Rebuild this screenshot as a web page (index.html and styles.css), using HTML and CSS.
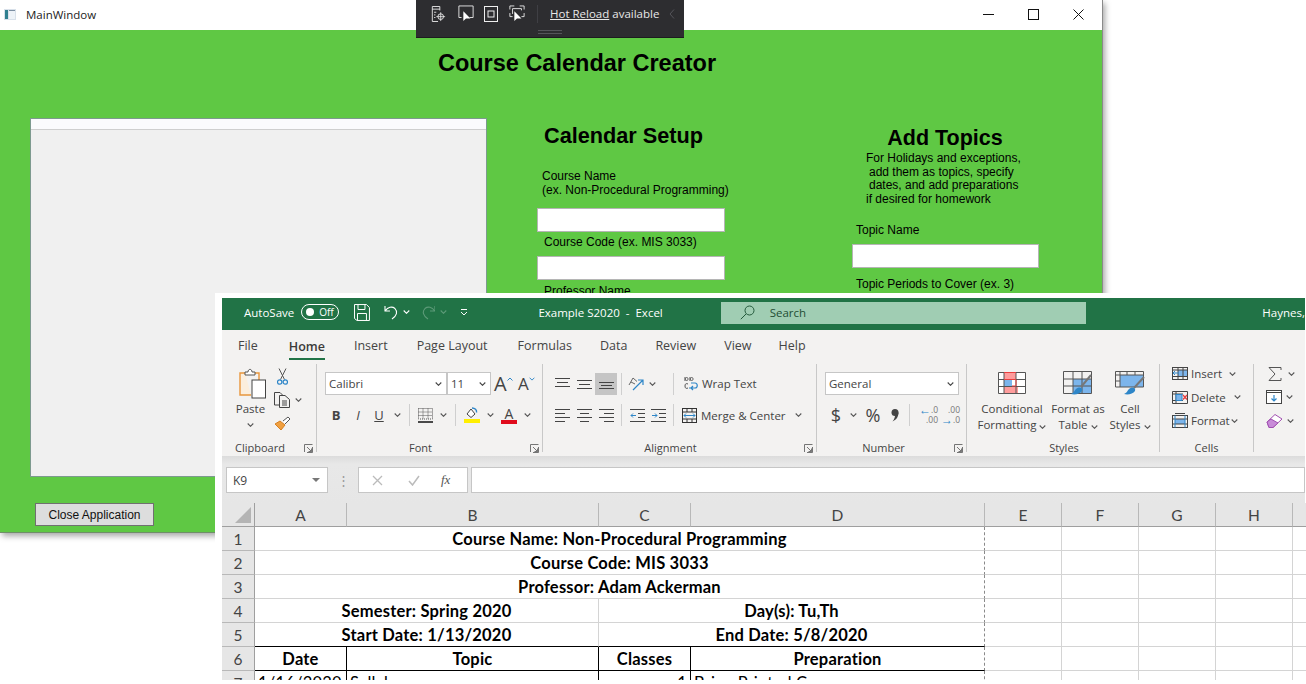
FILE: index.html
```html
<!DOCTYPE html>
<html lang="en">
<head>
  <meta charset="UTF-8" />
  <title>Course Calendar Creator</title>
  <link rel="stylesheet" href="styles.css">
</head>
<body>
  <svg class="defs" width="0" height="0">
    <symbol id="chev" viewBox="0 0 7 4"><path d="M.7.5 3.5 3.3 6.3.5" fill="none" stroke="currentColor" stroke-width="1.1"/></symbol>
    <symbol id="launch" viewBox="0 0 9 9"><path d="M.5 8V.5H8.5M8.5 3V8.5H3M3 3 7.5 7.5M7.5 4.5V7.5H4.5" fill="none" stroke="#666" stroke-width=".9"/></symbol>
  </svg>

  <div class="desktop">

    <div class="main-window">
      <div class="titlebar">
        <svg class="app-icon" width="12" height="11" viewBox="0 0 12 11"><rect width="12" height="11" fill="#d9e1ea"/><rect x="1" y="1" width="3" height="9" fill="#2f7f8f"/><rect x="5" y="2" width="6" height="8" fill="#eef3f8"/><rect x="5" y="1" width="6" height="1" fill="#7c8fa3"/></svg>
        <span class="titlebar-text">MainWindow</span>
        <div class="window-controls">
          <svg width="11" height="11" viewBox="0 0 11 11"><path d="M0 5.5H11" stroke="#111"/></svg>
          <svg width="11" height="11" viewBox="0 0 11 11"><rect x=".5" y=".5" width="10" height="10" fill="none" stroke="#111"/></svg>
          <svg width="11" height="11" viewBox="0 0 11 11"><path d="M.5.5 10.5 10.5M10.5.5.5 10.5" stroke="#111"/></svg>
        </div>
      </div>

      <div class="app">
        <h1 class="app-title">Course Calendar Creator</h1>
        <div class="app-columns">
          <div class="col-list">
            <div class="listbox"><div class="listbox-head"></div></div>
            <button class="close-btn">Close Application</button>
          </div>
          <div class="col-setup">
            <h2 class="setup-title">Calendar Setup</h2>
            <p class="label course-name">Course Name<br>(ex. Non-Procedural Programming)</p>
            <div class="textbox"></div>
            <p class="label course-code">Course Code (ex. MIS 3033)</p>
            <div class="textbox"></div>
            <p class="label prof-name">Professor Name</p>
          </div>
          <div class="col-topics">
            <h2 class="topics-title">Add Topics</h2>
            <div class="topics-note">
              <p>For Holidays and exceptions,</p>
              <p class="nudge">add them as topics, specify</p>
              <p class="nudge">dates, and add preparations</p>
              <p>if desired for homework</p>
            </div>
            <p class="label topic-name">Topic Name</p>
            <div class="textbox"></div>
            <p class="label topic-periods">Topic Periods to Cover (ex. 3)</p>
          </div>
        </div>
      </div>
    </div>

    <div class="hot-reload">
      <svg class="hr-icon hr-1" width="15" height="18" viewBox="0 0 17 20" fill="none" stroke="#eee"><path d="M8 18.5H1.5V1.5H10V6M1.5 4.5H10M3.5 8H6M3.5 11H5M3.5 14H5"/><circle cx="11" cy="13" r="3.2"/><path d="M11 8V18M6 13H16" stroke-width=".9"/></svg>
      <svg class="hr-icon hr-2" width="16" height="17" viewBox="0 0 18 19" fill="none" stroke="#eee"><path d="M4 14H1V1H17V14H13"/><path d="M6 7 6 18 9 15 14 15Z" fill="#fff" stroke="none"/></svg>
      <svg class="hr-icon hr-3" width="14" height="16" viewBox="0 0 14 16" fill="none" stroke="#eee"><rect x=".5" y=".5" width="13" height="15"/><rect x="4" y="5" width="6" height="6"/></svg>
      <svg class="hr-icon hr-4" width="16" height="17" viewBox="0 0 18 19" fill="none" stroke="#eee"><path d="M1 5V1H6M12 1H17V5M1 9V13H4M14 13H17V9M4 4H14V6M4 4V10"/><path d="M6 7 6 18 9 15 14 15Z" fill="#fff" stroke="none"/></svg>
      <span class="hr-sep"></span>
      <span class="hr-text"><a class="hr-link">Hot Reload</a> available</span>
      <svg class="hr-back" width="6" height="10" viewBox="0 0 6 10"><path d="M5 .5 1 5 5 9.5" fill="none" stroke="#55555a"/></svg>
      <div class="hr-grip"></div>
    </div>

    <div class="excel">
      <div class="xl-titlebar">
        <span class="autosave">AutoSave</span>
        <span class="toggle"><i class="toggle-dot"></i><span>Off</span></span>
        <svg class="xl-save" width="16" height="17" viewBox="0 0 16 17" fill="none" stroke="#fff"><path d="M.5.5H12.5L15.5 3.5V16.5H3L.5 14.5Z"/><path d="M4 .5V5.5H11V.5M3.5 16V9.5H12.5V16.5"/></svg>
        <svg class="xl-undo" width="15" height="15" viewBox="0 0 15 15" fill="none" stroke="#fff" stroke-width="1.1"><path d="M1 1V6H6M1 6C4 2 8 1 11 3.500C14 6.500 13 10.500 8 14"/></svg>
        <svg class="xl-chev" width="7" height="4" color="#fff"><use href="#chev"/></svg>
        <svg class="xl-redo" width="15" height="15" viewBox="0 0 15 15" fill="none" stroke="#5d9a78" stroke-width="1.1"><path d="M14 1V6H9M14 6C11 2 7 1 4 3.500C1 6.500 2 10.500 7 14"/></svg>
        <svg class="xl-chev dim" width="7" height="4" color="#5d9a78"><use href="#chev"/></svg>
        <svg class="xl-qat" width="8" height="8" viewBox="0 0 8 8" fill="none" stroke="#fff"><path d="M1 1.500H7M1 4 4 7 7 4"/></svg>
        <span class="xl-doc">Example S2020&nbsp; -&nbsp; Excel</span>
        <div class="xl-search">
          <svg width="15" height="15" viewBox="0 0 15 15" fill="none" stroke="#245a3c"><circle cx="9.500" cy="5.500" r="4.500"/><path d="M6 9 .8 14.200"/></svg>
          <span>Search</span>
        </div>
        <span class="xl-user">Haynes,</span>
      </div>

      <nav class="xl-tabs">
        <span class="tab t-file">File</span>
        <span class="tab t-home">Home</span>
        <span class="tab t-insert">Insert</span>
        <span class="tab t-page">Page Layout</span>
        <span class="tab t-formulas">Formulas</span>
        <span class="tab t-data">Data</span>
        <span class="tab t-review">Review</span>
        <span class="tab t-view">View</span>
        <span class="tab t-help">Help</span>
      </nav>

      <div class="ribbon">
        <section class="group g-clipboard">
          <div class="clip-body">
            <div class="paste">
              <svg width="28" height="31" viewBox="0 0 28 31" fill="none"><path d="M7 5H2V27H13" stroke="#e8963c" stroke-width="1.400" fill="#fbeedd"/><path d="M17 5H21V12" stroke="#e8963c" stroke-width="1.400"/><path d="M7 7V4H10C10 .5 14 .5 14 4H17V7Z" stroke="#555" fill="#fff"/><rect x="14" y="12" width="13.500" height="18" fill="#fff" stroke="#444"/></svg>
              <span class="paste-text">Paste</span>
              <svg class="paste-chev" width="7" height="4" color="#555"><use href="#chev"/></svg>
            </div>
            <div class="clip-tools">
              <svg width="11" height="17" viewBox="0 0 11 17" fill="none"><path d="M2 .5 7.500 11.500M9 .5 3.500 11.500" stroke="#555"/><circle cx="2.700" cy="14" r="2.200" stroke="#2e86c8" stroke-width="1.200"/><circle cx="8.300" cy="14" r="2.200" stroke="#2e86c8" stroke-width="1.200"/></svg>
              <div class="clip-copy">
                <svg width="16" height="16" viewBox="0 0 16 16" fill="none" stroke="#444"><path d="M5 13H.5V.5H6L9 3.500"/><path d="M5.500 3.500H11L15.500 7.500V15.500H5.500ZM8 9H13M8 11H13M8 13H13"/></svg>
                <svg class="chev-gap" width="7" height="4" color="#555"><use href="#chev"/></svg>
              </div>
              <svg class="clip-brush" width="17" height="16" viewBox="0 0 17 16" fill="none"><path d="M1 8 7 14 11 9 6 5Z" fill="#f0a040" stroke="#d67f20"/><path d="M9 5 14 1 16 3 11 8" stroke="#555" fill="#fff"/></svg>
            </div>
          </div>
          <div class="group-label">Clipboard<svg class="launch" width="9" height="9"><use href="#launch"/></svg></div>
        </section>

        <section class="group g-font">
          <div class="rows">
            <div class="row">
              <div class="box font-box"><span>Calibri</span><svg width="7" height="4" color="#444"><use href="#chev"/></svg></div>
              <div class="box size-box"><span>11</span><svg width="7" height="4" color="#444"><use href="#chev"/></svg></div>
              <span class="grow-a big">A<svg width="6" height="4" color="#2e86c8"><path d="M.5 3.500 3 1 5.500 3.500" fill="none" stroke="currentColor"/></svg></span>
              <span class="grow-a small">A<svg width="6" height="4" color="#2e86c8"><use href="#chev"/></svg></span>
            </div>
            <div class="row row-two">
              <span class="tool w22 bold">B</span>
              <span class="tool w22 italic">I</span>
              <span class="tool w20 under">U</span>
              <span class="tool w16"><svg width="7" height="4" color="#555"><use href="#chev"/></svg></span>
              <span class="sep"></span>
              <span class="tool w20"><svg width="15" height="15" viewBox="0 0 15 15" fill="none"><path d="M.5.5H14.500V11H.5ZM5 .5V11M10 .5V11M.5 4H14.500M.5 7.500H14.500" stroke="#555" stroke-dasharray="1 1"/><path d="M0 14H15" stroke="#111" stroke-width="1.500"/></svg></span>
              <span class="tool w16"><svg width="7" height="4" color="#555"><use href="#chev"/></svg></span>
              <span class="sep"></span>
              <span class="tool w22"><svg width="16" height="16" viewBox="0 0 16 16" fill="none"><path d="M3 7 7 2 11 7 7 10.500Z" stroke="#444" fill="#fff"/><path d="M8 1C11 1 13 3 12.500 5.500" stroke="#2e86c8" stroke-width="1.400"/><rect y="12" width="16" height="4" fill="#ffef00"/></svg></span>
              <span class="tool w14"><svg width="7" height="4" color="#555"><use href="#chev"/></svg></span>
              <span class="tool w24 color-a">A<i></i></span>
              <span class="tool w12"><svg width="7" height="4" color="#555"><use href="#chev"/></svg></span>
            </div>
          </div>
          <div class="group-label">Font<svg class="launch" width="9" height="9"><use href="#launch"/></svg></div>
        </section>

        <section class="group g-align">
          <div class="rows">
            <div class="row">
              <span class="tool w22"><svg width="15" height="11" viewBox="0 0 15 11"><path d="M0 .5H15M2 4.500H13M0 8.500H15" stroke="#444"/></svg></span>
              <span class="tool w22"><svg width="15" height="11" viewBox="0 0 15 11"><path d="M0 2.500H15M2 6.500H13M0 10.500H15" stroke="#444"/></svg></span>
              <span class="tool w22 active"><svg width="15" height="11" viewBox="0 0 15 11"><path d="M0 4.500H15M2 7.500H13M0 10.500H15" stroke="#444"/></svg></span>
              <span class="sep"></span>
              <span class="tool w18"><svg width="16" height="14" viewBox="0 0 16 14" fill="none"><path d="M1 8 5 1 9 4.500M3 5 7 7" stroke="#666"/><path d="M5 13 15 3M10 3H15V8" stroke="#2e86c8" stroke-width="1.200"/></svg></span>
              <span class="tool w14"><svg width="7" height="4" color="#555"><use href="#chev"/></svg></span>
              <span class="sep sep-far"></span>
              <svg class="wrap-icon" width="14" height="15" viewBox="0 0 14 15" fill="none"><path d="M1 5V1M1 3C2 1 4 1 4 3S2 5 1 3ZM6 1V5M6 3C7 1 9 1 9 3S7 5 6 3ZM4 8C2 7 1 8 1 10S2 13 4 12" stroke="#555"/><path d="M5 12H11C14 12 14 7 11 7H7M7 12 9 10M7 12 9 14" stroke="#2e86c8" stroke-width="1.200"/></svg>
              <span class="wrap-text">Wrap Text</span>
            </div>
            <div class="row row-two">
              <span class="tool w22"><svg width="15" height="13" viewBox="0 0 15 13"><path d="M0 .5H15M0 4.500H10M0 8.500H15M0 12.500H10" stroke="#444"/></svg></span>
              <span class="tool w22"><svg width="15" height="13" viewBox="0 0 15 13"><path d="M0 .5H15M3 4.500H12M0 8.500H15M3 12.500H12" stroke="#444"/></svg></span>
              <span class="tool w22"><svg width="15" height="13" viewBox="0 0 15 13"><path d="M0 .5H15M5 4.500H15M0 8.500H15M5 12.500H15" stroke="#444"/></svg></span>
              <span class="sep"></span>
              <span class="tool w20"><svg width="15" height="13" viewBox="0 0 15 13" fill="none"><path d="M0 .5H15M8 4.500H15M8 8.500H15M0 12.500H15" stroke="#444"/><path d="M6 6.500H1M3 4.500 1 6.500 3 8.500" stroke="#2e86c8"/></svg></span>
              <span class="tool w22"><svg width="15" height="13" viewBox="0 0 15 13" fill="none"><path d="M0 .5H15M8 4.500H15M8 8.500H15M0 12.500H15" stroke="#444"/><path d="M1 6.500H6M4 4.500 6 6.500 4 8.500" stroke="#2e86c8"/></svg></span>
              <span class="sep"></span>
              <svg class="merge-icon" width="15" height="15" viewBox="0 0 15 15" fill="none"><rect x=".5" y=".5" width="14" height="14" stroke="#333"/><path d="M.5 4H14.500M.5 11H14.500M5 .5V4M10 .5V4M5 11V14.500M10 11V14.500" stroke="#333"/><path d="M2 7.500H13M4 5.500 2 7.500 4 9.500M11 5.500 13 7.500 11 9.500" stroke="#2e86c8"/></svg>
              <span class="wrap-text">Merge &amp; Center</span>
              <svg class="merge-chev" width="7" height="4" color="#555"><use href="#chev"/></svg>
            </div>
          </div>
          <div class="group-label">Alignment<svg class="launch" width="9" height="9"><use href="#launch"/></svg></div>
        </section>

        <section class="group g-number">
          <div class="rows">
            <div class="row">
              <div class="box number-box"><span>General</span><svg width="7" height="4" color="#444"><use href="#chev"/></svg></div>
            </div>
            <div class="row row-two">
              <span class="tool w22 num-sym">$</span>
              <span class="tool w12"><svg width="7" height="4" color="#555"><use href="#chev"/></svg></span>
              <span class="tool w28 num-sym">%</span>
              <span class="tool w16"><svg width="8" height="13" viewBox="0 0 8 13"><circle cx="4" cy="3.500" r="3.500" fill="#444"/><path d="M7.500 3.500C7.500 8 5 11 1.500 12.500 3.500 10 4 8 4 6Z" fill="#444"/></svg></span>
              <span class="sep sep-num"></span>
              <span class="tool w23 dec">
                <span class="dec-line"><i class="dec-arrow">&#8592;</i>.0</span>
                <span class="dec-line">.00</span>
              </span>
              <span class="tool w22 dec">
                <span class="dec-line">.00</span>
                <span class="dec-line"><i class="dec-arrow">&#8594;</i>.0</span>
              </span>
            </div>
          </div>
          <div class="group-label">Number<svg class="launch" width="9" height="9"><use href="#launch"/></svg></div>
        </section>

        <section class="group g-styles">
          <div class="style-btns">
            <div class="style-btn w-cond">
              <svg width="28" height="22" viewBox="0 0 28 22"><rect x=".5" y=".5" width="27" height="21" fill="#fff"/><rect x="6" y="1" width="12" height="6.500" fill="#ff9c9c"/><rect x="6" y="8" width="8" height="6" fill="#7cb5ec"/><rect x="6" y="14.500" width="14" height="7" fill="#ff9c9c"/><path d="M.5.5H27.500V21.500H.5ZM.5 7.500H27.500M.5 14.500H27.500M6 .5V21.500M18 .5V21.500" fill="none" stroke="#555"/><path d="M6 7.500H18V14H14M6 .5H18" fill="none" stroke="#e84040"/></svg>
              <span class="btn-text">Conditional</span>
              <span class="btn-text">Formatting <svg width="7" height="4" color="#555"><use href="#chev"/></svg></span>
            </div>
            <div class="style-btn w-table">
              <svg width="30" height="24" viewBox="0 0 30 24"><rect x="10" y="8" width="18" height="14" fill="#7cb5ec"/><path d="M.5.5H28.500V22.500H.5ZM.5 8H28.500M.5 15H28.500M10 .5V22.500M19 .5V22.500" fill="none" stroke="#555"/><path d="M28 4 18 16" stroke="#777" stroke-width="2"/><path d="M13 18C17 15 20 17 19 20 17 23 12 24 8 23 11 22 11 20 13 18Z" fill="#2e86c8"/></svg>
              <span class="btn-text">Format as</span>
              <span class="btn-text">Table <svg width="7" height="4" color="#555"><use href="#chev"/></svg></span>
            </div>
            <div class="style-btn w-cell">
              <svg width="30" height="24" viewBox="0 0 30 24"><rect x="5" y="4" width="24" height="12" fill="#7cb5ec"/><path d="M.5.5H28.500V16H.5ZM.5 4H28.500M5 .5V16M.5 10H5M12 .5V4M20 .5V4" fill="none" stroke="#555"/><path d="M29 6 19 17" stroke="#777" stroke-width="2"/><path d="M14 18C18 15 21 17 20 20 18 23 13 24 9 23 12 22 12 20 14 18Z" fill="#2e86c8"/></svg>
              <span class="btn-text">Cell</span>
              <span class="btn-text">Styles <svg width="7" height="4" color="#555"><use href="#chev"/></svg></span>
            </div>
          </div>
          <div class="group-label">Styles</div>
        </section>

        <section class="group g-cells">
          <div class="cell-rows">
            <div class="cell-row">
              <svg width="16" height="13" viewBox="0 0 16 13" fill="none"><rect x=".5" y=".5" width="15" height="12" stroke="#444"/><rect x="6" y="3" width="9" height="6" fill="#7cb5ec"/><path d="M.5 3H15.500M.5 9.500H15.500M6 .5V12.500M11 .5V12.500" stroke="#444"/><path d="M7 6H1M3 4 1 6 3 8" stroke="#2e86c8"/></svg>
              <span class="cell-label">Insert</span><svg class="chev-insert" width="7" height="4" color="#555"><use href="#chev"/></svg>
            </div>
            <div class="cell-row">
              <svg width="16" height="13" viewBox="0 0 16 13" fill="none"><path d="M.5.5H15.500V12.500H.5ZM.5 3H11M.5 9.500H11M4 .5V12.500" stroke="#444"/><rect x="4" y="3.500" width="6" height="6" fill="#7cb5ec" stroke="#2e86c8"/><path d="M11 4 15 8.500M15 4 11 8.500" stroke="#e84040" stroke-width="1.300"/></svg>
              <span class="cell-label">Delete</span><svg class="chev-delete" width="7" height="4" color="#555"><use href="#chev"/></svg>
            </div>
            <div class="cell-row">
              <svg width="16" height="15" viewBox="0 0 16 15" fill="none"><rect x=".5" y="2.500" width="15" height="12" stroke="#444"/><rect x="3" y="6" width="10" height="5" fill="#7cb5ec"/><path d="M.5 6H15.500M.5 11H15.500M3 .5H13" stroke="#444"/><path d="M3 2.500V14.500M13 2.500V14.500" stroke="#2e86c8"/></svg>
              <span class="cell-label">Format</span><svg class="chev-format" width="7" height="4" color="#555"><use href="#chev"/></svg>
            </div>
          </div>
          <div class="group-label">Cells</div>
        </section>

        <section class="group g-edit">
          <div class="cell-rows edit-rows">
            <div class="cell-row">
              <svg class="sum" width="14" height="14" viewBox="0 0 14 14" fill="none"><path d="M13 3V.5H1L7 7 1 13.500H13V11" stroke="#555"/></svg>
              <svg class="chev-sum" width="7" height="4" color="#555"><use href="#chev"/></svg>
            </div>
            <div class="cell-row">
              <svg width="16" height="14" viewBox="0 0 16 14" fill="none"><rect x=".5" y=".5" width="15" height="13" stroke="#444" fill="#fff"/><path d="M.5 2.500H15.500" stroke="#444"/><path d="M8 5V11M5.500 8.500 8 11 10.500 8.500" stroke="#2e86c8" stroke-width="1.200"/></svg>
              <svg class="chev-edit" width="7" height="4" color="#555"><use href="#chev"/></svg>
            </div>
            <div class="cell-row">
              <svg width="17" height="14" viewBox="0 0 17 14" fill="none"><path d="M1 8 9 .5 16 5 7 13.500H3Z" fill="#fff" stroke="#a04fb0"/><path d="M1 8 5 5 12 9 7 13.500H3Z" fill="#c88bd8" stroke="#a04fb0"/></svg>
              <svg class="chev-edit" width="7" height="4" color="#555"><use href="#chev"/></svg>
            </div>
          </div>
        </section>
      </div>

      <div class="formula-bar">
        <div class="name-box"><span>K9</span><i class="caret"></i></div>
        <span class="fb-dots">&#8942;</span>
        <div class="fx-box">
          <svg width="11" height="11" viewBox="0 0 11 11"><path d="M1 1 10 10M10 1 1 10" stroke="#bbb" stroke-width="1.300"/></svg>
          <svg width="12" height="11" viewBox="0 0 12 11"><path d="M1 6 4.500 10 11 1" stroke="#bbb" stroke-width="1.500" fill="none"/></svg>
          <span class="fx">fx</span>
        </div>
        <div class="formula-input"></div>
      </div>

      <table class="sheet">
        <colgroup>
          <col class="col-rowhead"><col class="col-a"><col class="col-b"><col class="col-c"><col class="col-d"><col class="col-e"><col class="col-e"><col class="col-e"><col class="col-e"><col class="col-last">
        </colgroup>
        <thead>
          <tr>
            <th class="corner"><i></i></th><th>A</th><th>B</th><th>C</th><th>D</th><th>E</th><th>F</th><th>G</th><th>H</th><th></th>
          </tr>
        </thead>
        <tbody>
          <tr>
            <th>1</th><td colspan="4" class="head dash">Course Name: Non-Procedural Programming</td><td></td><td></td><td></td><td></td><td></td>
          </tr>
          <tr>
            <th>2</th><td colspan="4" class="head dash">Course Code: MIS 3033</td><td></td><td></td><td></td><td></td><td></td>
          </tr>
          <tr>
            <th>3</th><td colspan="4" class="head dash">Professor: Adam Ackerman</td><td></td><td></td><td></td><td></td><td></td>
          </tr>
          <tr>
            <th>4</th><td colspan="2" class="head">Semester: Spring 2020</td><td colspan="2" class="head dash">Day(s): Tu,Th</td><td></td><td></td><td></td><td></td><td></td>
          </tr>
          <tr class="before-cols">
            <th>5</th><td colspan="2" class="head">Start Date: 1/13/2020</td><td colspan="2" class="head dash">End Date: 5/8/2020</td><td></td><td></td><td></td><td></td><td></td>
          </tr>
          <tr class="cols">
            <th>6</th><td class="head">Date</td><td class="head">Topic</td><td class="head">Classes</td><td class="head dash">Preparation</td><td></td><td></td><td></td><td></td><td></td>
          </tr>
          <tr class="cols">
            <th>7</th><td>1/16/2020</td><td>Syllabus</td><td class="num">1</td><td class="dash">Bring Printed Course</td><td></td><td></td><td></td><td></td><td></td>
          </tr>
        </tbody>
      </table>
    </div>
  </div>
</body>
</html>
```

FILE: styles.css
```css
:root {
  --green: #5fc844;
  --xl-green: #217346;
  --ribbon: #f3f2f1;
  --ribbon-fg: #444;
  --head-bg: #e6e6e6;
  --grid: #d4d4d4;
}

* {
  box-sizing: border-box;
}

body {
  margin: 0;
  background-color: #fff;
  font-family: "Liberation Sans", Arial, sans-serif;
}

.defs {
  position: absolute;
}

.desktop {
  position: relative;
  width: 1306px;
  height: 680px;
  overflow: hidden;
}

p, h1, h2 {
  margin: 0;
  font-weight: normal;
}

/* main window */

.main-window {
  position: absolute;
  left: 0;
  top: 0;
  width: 1103px;
  height: 533px;
  border-right: 1px solid #8a8a8a;
  border-bottom: 1px solid #6f8f68;
  box-shadow: 2px 3px 6px rgba(0, 0, 0, 0.35);
  display: flex;
  flex-direction: column;
}

.titlebar {
  height: 30px;
  flex: none;
  background-color: #fff;
  display: flex;
  align-items: center;
  padding: 0 0 2px 4px;
}

.titlebar-text {
  margin-left: 10px;
  font-family: "Open Sans", sans-serif;
  font-size: 11.5px;
  color: #222;
}

.window-controls {
  margin-left: auto;
  margin-right: 18px;
  display: flex;
  gap: 34px;
}

.app {
  flex: 1;
  background-color: var(--green);
  color: #000;
}

.app-title {
  font-size: 23.5px;
  font-weight: bold;
  line-height: 28px;
  text-align: center;
  margin-top: 19px;
  margin-left: 52px;
}

.app-columns {
  display: flex;
  margin-top: 41px;
  padding-left: 30px;
}

.col-list {
  width: 457px;
}

.listbox {
  height: 359px;
  border: 1px solid #7d9a8f;
  background-color: #f0f0f0;
}

.listbox-head {
  height: 11px;
  background-color: #fbfbfd;
  border-bottom: 1px solid #cfcfcf;
}

.close-btn {
  display: block;
  width: 119px;
  height: 23px;
  margin: 26px 0 0 5px;
  padding: 0;
  background-color: #dddddd;
  border: 1px solid #707070;
  font-family: "Liberation Sans", Arial, sans-serif;
  font-size: 12px;
  color: #111;
}

.col-setup {
  width: 188px;
  margin-left: 50px;
}

.setup-title {
  font-size: 21.7px;
  font-weight: bold;
  line-height: 26px;
  margin: 5px 0 0 7px;
  white-space: nowrap;
}

.label {
  font-size: 12px;
  line-height: 14px;
  white-space: nowrap;
}

.course-name {
  margin: 20px 0 0 5px;
}

.textbox {
  width: 188px;
  height: 24px;
  background-color: #fff;
  border: 1px solid #b5b5b5;
}

.course-name + .textbox {
  margin-top: 11px;
}

.course-code {
  margin: 3px 0 0 7px;
}

.course-code + .textbox {
  margin-top: 7px;
}

.prof-name {
  margin: 4px 0 0 7px;
}

.col-topics {
  width: 188px;
  margin-left: 127px;
}

.topics-title {
  font-size: 21.5px;
  font-weight: bold;
  line-height: 26px;
  text-align: center;
  margin-top: 7px;
  padding-right: 2px;
}

.topics-note {
  margin: 1px 0 0 14px;
  font-size: 12px;
  line-height: 13.5px;
  white-space: nowrap;
}

.topics-note .nudge {
  padding-left: 3px;
}

.topic-name {
  margin: 17px 0 0 4px;
}

.topic-name + .textbox {
  margin-top: 7px;
  width: 187px;
}

.topic-periods {
  margin: 9px 0 0 4px;
}

/* hot reload toolbar */

.hot-reload {
  position: absolute;
  left: 416px;
  top: 0;
  width: 268px;
  height: 38px;
  background-color: #2d2d30;
  border-bottom: 1px solid #1c1c1e;
  display: flex;
  align-items: center;
  padding-bottom: 10px;
}

.hr-icon {
  flex: none;
}

.hr-1 { margin-left: 15px; }
.hr-2 { margin-left: 12px; }
.hr-3 { margin-left: 10px; }
.hr-4 { margin-left: 11px; }

.hr-sep {
  width: 1px;
  height: 18px;
  background-color: #3f3f44;
  margin-left: 12px;
}

.hr-text {
  margin-left: 12px;
  font-family: "Open Sans", sans-serif;
  font-size: 11.5px;
  color: #e8e8e8;
  white-space: nowrap;
}

.hr-link {
  text-decoration: underline;
}

.hr-back {
  margin-left: 10px;
}

.hr-grip {
  position: absolute;
  left: 122px;
  top: 30px;
  width: 24px;
  height: 4px;
  border-top: 1px solid #55555a;
  border-bottom: 1px solid #55555a;
}

/* excel window */

.excel {
  position: absolute;
  left: 215px;
  top: 293px;
  width: 1091px;
  height: 387px;
  padding: 5px 0 0 7px;
  background-color: #fff;
  overflow: hidden;
  font-family: "Open Sans", sans-serif;
}

.xl-titlebar {
  height: 32px;
  width: 1083px;
  background-color: var(--xl-green);
  color: #fff;
  display: flex;
  align-items: center;
  font-size: 11.5px;
  padding: 0 0 4px 22px;
  white-space: nowrap;
}

.autosave {
  width: 57px;
}

.toggle {
  width: 38px;
  height: 16px;
  border: 1px solid #fff;
  border-radius: 8px;
  display: flex;
  align-items: center;
  justify-content: space-between;
  padding: 0 4px;
  font-size: 10px;
}

.toggle-dot {
  width: 8px;
  height: 8px;
  border-radius: 50%;
  background-color: #fff;
}

.xl-save {
  margin-left: 15px;
}

.xl-undo {
  margin-left: 14px;
}

.xl-chev {
  margin-left: 4px;
}

.xl-redo {
  margin-left: 11px;
}

.xl-chev.dim {
  margin-left: 5px;
}

.xl-qat {
  margin-left: 13px;
}

.xl-doc {
  width: 183px;
  margin-left: 70px;
}

.xl-search {
  width: 367px;
  height: 22px;
  margin-top: 2px;
  background-color: #a0cdb3;
  color: #1f4d34;
  display: flex;
  align-items: center;
  gap: 15px;
  padding: 0 0 1px 19px;
}

.xl-user {
  margin-left: 176px;
}

.xl-tabs {
  position: relative;
  height: 32px;
  width: 1083px;
  background-color: var(--ribbon);
  display: flex;
  align-items: center;
  font-size: 12.5px;
  color: var(--ribbon-fg);
  padding-bottom: 2px;
}

.tab {
  white-space: nowrap;
}

.t-file { margin-left: 16px; }
.t-home { margin-left: 31px; font-weight: 600; color: #3b3a39; padding: 7px 0 3px; border-bottom: 2px solid var(--xl-green); }
.t-insert { margin-left: 29px; }
.t-page { margin-left: 29px; }
.t-formulas { margin-left: 30px; }
.t-data { margin-left: 28px; }
.t-review { margin-left: 28px; }
.t-view { margin-left: 28px; }
.t-help { margin-left: 27px; }

.ribbon {
  width: 1083px;
  height: 94px;
  background-color: var(--ribbon);
  display: flex;
  align-items: flex-start;
  padding-top: 2px;
  color: var(--ribbon-fg);
  font-size: 11.5px;
}

.group {
  position: relative;
  height: 88px;
  flex: none;
  border-right: 1px solid #c8c8c8;
  display: flex;
  flex-direction: column;
}

.g-clipboard { width: 95px; }
.g-font { width: 226px; padding-left: 8px; }
.g-align { width: 274px; padding-left: 8px; }
.g-number { width: 150px; padding-left: 8px; }
.g-styles { width: 193px; padding-left: 3px; }
.g-cells { width: 94px; }
.g-edit { width: 52px; border-right: none; }

.group-label {
  position: absolute;
  left: 0;
  right: 0;
  bottom: -4px;
  text-align: center;
  font-size: 11px;
  line-height: 16px;
}

.g-clipboard .group-label,
.g-font .group-label,
.g-align .group-label,
.g-number .group-label {
  right: 18px;
}

.g-number .group-label {
  right: 16px;
}

.g-styles .group-label {
  left: 2px;
}

.launch {
  position: absolute;
  right: -15px;
  top: 4px;
}

.g-number .launch {
  right: -13px;
}

.clip-body {
  display: flex;
  padding: 4px 0 0 16px;
}

.paste {
  width: 28px;
  display: flex;
  flex-direction: column;
  align-items: center;
}

.paste-text {
  line-height: 16px;
  margin-top: 2px;
  margin-left: -3px;
}

.paste-chev {
  margin-top: 6px;
  margin-left: -3px;
}

.clip-tools {
  margin-left: 8px;
  display: flex;
  flex-direction: column;
  padding-left: 3px;
}

.clip-copy {
  display: flex;
  align-items: center;
  margin: 7px 0 0 -3px;
}

.chev-gap {
  margin-left: 5px;
}

.clip-brush {
  margin: 8px 0 0 -3px;
}

.rows {
  display: flex;
  flex-direction: column;
  padding-top: 8px;
}

.row {
  display: flex;
  align-items: center;
  height: 23px;
}

.row-two {
  margin-top: 8px;
  height: 24px;
}

.box {
  height: 23px;
  background-color: #fff;
  border: 1px solid #c6c6c6;
  display: flex;
  align-items: center;
  justify-content: space-between;
  padding: 0 4px 0 3px;
  font-size: 11.5px;
}

.font-box { width: 122px; }
.size-box { width: 44px; }
.number-box { width: 134px; }

.grow-a {
  position: relative;
  display: flex;
  align-items: flex-start;
  font-size: 20px;
  line-height: 23px;
}

.grow-a.big { margin-left: 3px; width: 24px; }
.grow-a.small { font-size: 17px; }

.grow-a svg {
  margin-top: 5px;
}

.tool {
  flex: none;
  height: 22px;
  display: flex;
  align-items: center;
  justify-content: center;
  font-size: 12px;
  color: #444;
}

.w12 { width: 12px; }
.w14 { width: 14px; }
.w16 { width: 16px; }
.w18 { width: 18px; }
.w20 { width: 20px; }
.w22 { width: 22px; }
.w23 { width: 23px; }
.w24 { width: 24px; }
.w28 { width: 28px; }

.bold { font-weight: 700; font-size: 13px; }
.italic { font-style: italic; font-size: 13px; }
.under { text-decoration: underline; font-size: 13px; }

.color-a {
  flex-direction: column;
  font-size: 14px;
  line-height: 13px;
}

.color-a i {
  width: 16px;
  height: 4px;
  background-color: #e00b1c;
}

.active {
  background-color: #c5c5c5;
}

.sep {
  flex: none;
  width: 1px;
  height: 22px;
  background-color: #cfcfcf;
  margin: 0 5px 0 4px;
}

.sep-far {
  margin-left: 14px;
}

.sep-num {
  margin-left: 6px;
}

.wrap-icon {
  margin-left: 5px;
  flex: none;
}

.merge-icon {
  margin-left: 3px;
  flex: none;
}

.wrap-text {
  margin-left: 4px;
  white-space: nowrap;
}

.merge-chev {
  margin-left: 9px;
}

.num-sym {
  font-size: 18px;
}

.dec {
  flex-direction: column;
  align-items: flex-end;
  font-size: 8.5px;
  line-height: 10.5px;
  color: #777;
}

.dec-line {
  display: flex;
  align-items: center;
}

.dec-arrow {
  color: #2e86c8;
  font-style: normal;
  font-size: 12px;
  line-height: 10.5px;
}

.style-btns {
  display: flex;
  padding-top: 7px;
}

.style-btn {
  display: flex;
  flex-direction: column;
  align-items: center;
  height: 60px;
  white-space: nowrap;
}

.style-btn > svg {
  height: 24px;
  flex: none;
  margin-bottom: 6px;
}

.w-cond { width: 84px; }
.w-table { width: 48px; }
.w-cell { width: 56px; }

.btn-text {
  line-height: 16px;
}

.cell-rows {
  display: flex;
  flex-direction: column;
  margin-top: -2px;
  padding-left: 12px;
}

.cell-row {
  height: 23.500px;
  display: flex;
  align-items: center;
}

.cell-row svg {
  flex: none;
}

.cell-label {
  margin-left: 3px;
}

.chev-insert { margin-left: 7px; }
.chev-delete { margin-left: 8px; }
.chev-format { margin-left: 1px; }

.edit-rows {
  padding-left: 12px;
}

.sum { margin-left: 2px; }
.chev-sum { margin-left: 6px; }
.chev-edit { margin-left: 4px; }

/* formula bar */

.formula-bar {
  width: 1083px;
  height: 47px;
  background: linear-gradient(#dcdcdc, #e8e8e8 8px, #e6e6e6);
  display: flex;
  align-items: flex-start;
  padding: 11px 0 0 4px;
}

.name-box {
  width: 102px;
  height: 26px;
  background-color: #fff;
  border: 1px solid #c6c6c6;
  display: flex;
  align-items: center;
  justify-content: space-between;
  padding: 0 7px 0 6px;
  font-size: 12px;
  color: #444;
}

.caret {
  border-left: 4px solid transparent;
  border-right: 4px solid transparent;
  border-top: 4px solid #777;
}

.fb-dots {
  width: 30px;
  text-align: center;
  line-height: 26px;
  color: #999;
  font-size: 13px;
}

.fx-box {
  width: 110px;
  height: 26px;
  background-color: #fff;
  border: 1px solid #c6c6c6;
  display: flex;
  align-items: center;
  padding-left: 13px;
  gap: 25px;
}

.fx {
  font-family: "Liberation Serif", serif;
  font-style: italic;
  font-size: 13px;
  color: #555;
  margin-left: -4px;
}

.formula-input {
  flex: 1;
  height: 26px;
  margin-left: 3px;
  background-color: #fff;
  border: 1px solid #c6c6c6;
}

/* sheet */

.sheet {
  table-layout: fixed;
  width: 1083px;
  border-collapse: separate;
  border-spacing: 0;
  font-family: Lato, sans-serif;
  font-size: 16.5px;
  letter-spacing: 0.2px;
  color: #000;
}

.col-rowhead { width: 33px; }
.col-a { width: 92px; }
.col-b { width: 252px; }
.col-c { width: 92px; }
.col-d { width: 294px; }
.col-e { width: 77px; }
.col-last { width: 90px; }

.sheet th {
  height: 24px;
  padding: 0;
  background-color: var(--head-bg);
  font-weight: normal;
  font-size: 15.500px;
  color: #444;
  border-bottom: 1px solid #b8b8b8;
}

.sheet thead th {
  height: 24px;
  border-bottom: 1px solid #9f9f9f;
  border-right: 1px solid #b8b8b8;
}

.sheet thead th:first-child {
  border-right: 1px solid #9f9f9f;
}

.sheet tbody th {
  border-right: 1px solid #9f9f9f;
}

.sheet td {
  height: 24px;
  padding: 1px 3px 0;
  line-height: 22px;
  white-space: nowrap;
  overflow: hidden;
  border-right: 1px solid var(--grid);
  border-bottom: 1px solid var(--grid);
}

.corner {
  position: relative;
}

.corner i {
  position: absolute;
  right: 3px;
  bottom: 3px;
  border-left: 16px solid transparent;
  border-bottom: 16px solid #b4b4b4;
}

.head {
  font-weight: 700;
  text-align: center;
}

.num {
  text-align: right;
}

.sheet td.dash {
  border-right: 1px dashed #8a8a8a;
}

.before-cols td.head {
  border-bottom-color: #000;
}

.cols td:nth-child(-n+5) {
  border-bottom-color: #000;
}

.cols td:nth-child(-n+4) {
  border-right-color: #000;
}
```
